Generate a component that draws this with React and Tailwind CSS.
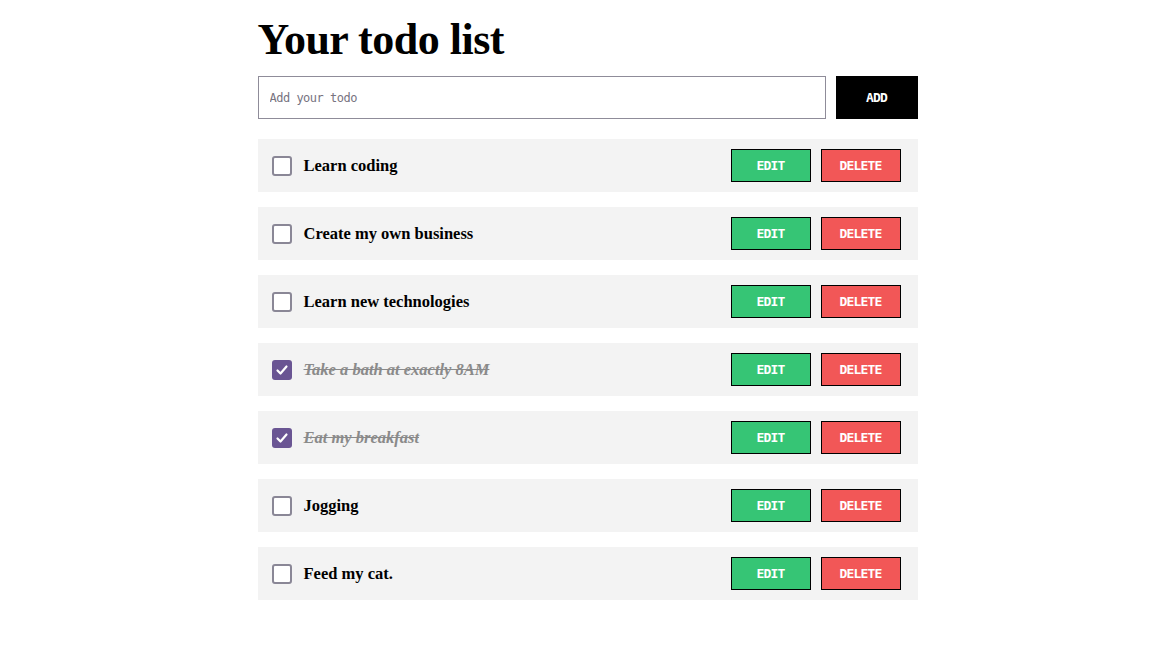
import { useState } from "react";

const initialTodos = [
  { id: 1, text: "Learn coding", done: false },
  { id: 2, text: "Create my own business", done: false },
  { id: 3, text: "Learn new technologies", done: false },
  { id: 4, text: "Take a bath at exactly 8AM", done: true },
  { id: 5, text: "Eat my breakfast", done: true },
  { id: 6, text: "Jogging", done: false },
  { id: 7, text: "Feed my cat.", done: false },
];

export default function App() {
  const [todos, setTodos] = useState(initialTodos);
  const [value, setValue] = useState("");

  const toggle = (id) =>
    setTodos(todos.map((t) => (t.id === id ? { ...t, done: !t.done } : t)));

  const remove = (id) => setTodos(todos.filter((t) => t.id !== id));

  const add = () => {
    if (!value.trim()) return;
    setTodos([...todos, { id: Date.now(), text: value, done: false }]);
    setValue("");
  };

  return (
    <div className="min-h-screen bg-white font-['Liberation_Serif',serif]">
      <div className="w-[660px] mx-auto pt-[14px]">
        <h1 className="text-[44px] leading-[52px] font-bold text-black tracking-[-0.5px]">
          Your todo list
        </h1>

        {/* input */}
        <div className="flex gap-[10px] mt-[10px]">
          <input
            value={value}
            onChange={(e) => setValue(e.target.value)}
            placeholder="Add your todo"
            className="flex-1 h-[43px] border border-[#8f8c99] px-[11px] text-[12px] tracking-[-0.5px] font-['DejaVu_Sans_Mono',monospace] placeholder:text-[#77737f] outline-none"
          />
          <button
            onClick={add}
            className="w-[82px] h-[43px] bg-black text-white text-[13px] tracking-[-0.8px] font-bold font-['DejaVu_Sans_Mono',monospace]"
          >
            ADD
          </button>
        </div>

        {/* list */}
        <div className="flex flex-col gap-[15px] mt-[20px]">
          {todos.map((t) => (
            <div
              key={t.id}
              className="h-[53px] bg-[#f3f3f3] flex items-center pl-[14px] pr-[17px]"
            >
              <button
                onClick={() => toggle(t.id)}
                className={`w-[20px] h-[20px] rounded-[3px] flex items-center justify-center ${
                  t.done
                    ? "bg-[#6a5593]"
                    : "border-2 border-[#8a8796] bg-white"
                }`}
              >
                {t.done && (
                  <svg width="14" height="14" viewBox="0 0 14 14" fill="none">
                    <path
                      d="M2.5 7.5 L5.5 10.5 L11.5 3.5"
                      stroke="white"
                      strokeWidth="2.2"
                      strokeLinecap="round"
                      strokeLinejoin="round"
                    />
                  </svg>
                )}
              </button>
              <span
                className={`ml-[12px] pt-[2px] text-[16.5px] font-bold ${
                  t.done ? "italic line-through text-[#8a8a8a]" : "text-black"
                }`}
              >
                {t.text}
              </span>
              <div className="ml-auto flex gap-[10px]">
                <button className="w-[80px] h-[33px] bg-[#36c575] border border-black text-white text-[13px] tracking-[-0.8px] font-bold font-['DejaVu_Sans_Mono',monospace]">
                  EDIT
                </button>
                <button
                  onClick={() => remove(t.id)}
                  className="w-[80px] h-[33px] bg-[#f25757] border border-black text-white text-[13px] tracking-[-0.8px] font-bold font-['DejaVu_Sans_Mono',monospace]"
                >
                  DELETE
                </button>
              </div>
            </div>
          ))}
        </div>
      </div>
    </div>
  );
}
